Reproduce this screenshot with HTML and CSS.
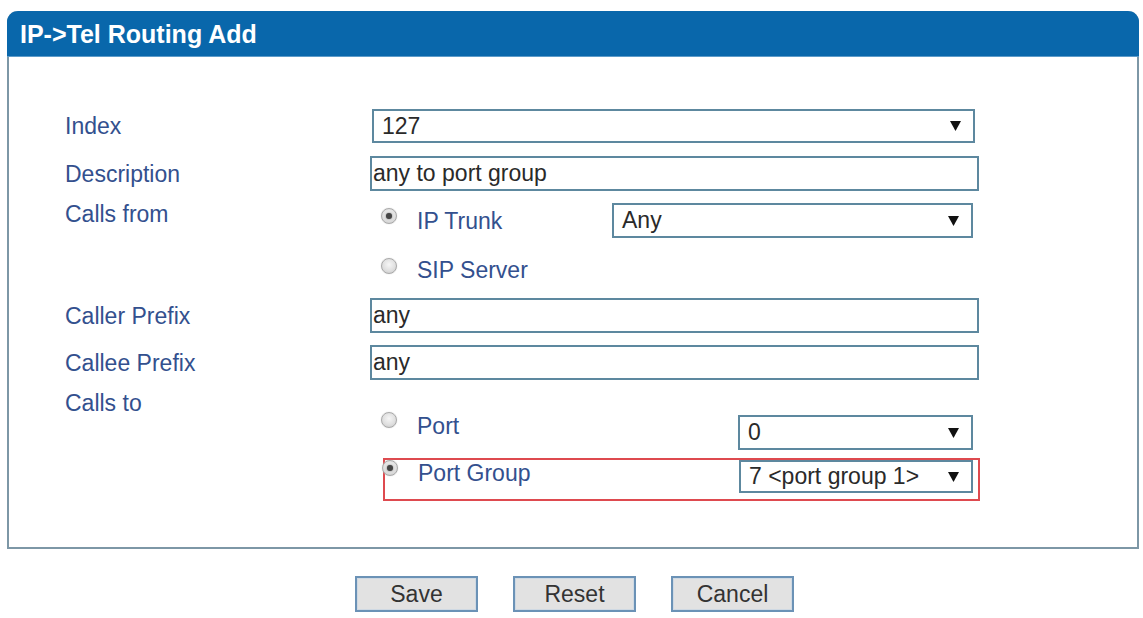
FILE: index.html
```html
<!DOCTYPE html>
<html>
<head>
<meta charset="utf-8">
<link rel="stylesheet" href="styles.css">
</head>
<body>
<div class="panel">
  <div class="head">IP-&gt;Tel Routing Add</div>
  <div class="body">
    <div class="row row-index">
      <div class="lbl">Index</div>
      <div class="ctl">
        <div class="sel sel-index"><span>127</span><svg class="arr" width="11" height="10" viewBox="0 0 11 10"><path d="M0 0 H11 L5.5 10 Z"/></svg></div>
      </div>
    </div>
    <div class="row row-desc">
      <div class="lbl">Description</div>
      <div class="ctl"><div class="inp">any to port group</div></div>
    </div>
    <div class="group group-from">
      <div class="lbl">Calls from</div>
      <div class="ctl col">
        <div class="opt opt-ip">
          <span class="radio on"></span><span class="otxt">IP Trunk</span>
          <div class="sel sel-any"><span>Any</span><svg class="arr" width="11" height="10" viewBox="0 0 11 10"><path d="M0 0 H11 L5.5 10 Z"/></svg></div>
        </div>
        <div class="opt opt-sip">
          <span class="radio"></span><span class="otxt">SIP Server</span>
        </div>
      </div>
    </div>
    <div class="row row-caller">
      <div class="lbl">Caller Prefix</div>
      <div class="ctl"><div class="inp">any</div></div>
    </div>
    <div class="row row-callee">
      <div class="lbl">Callee Prefix</div>
      <div class="ctl"><div class="inp">any</div></div>
    </div>
    <div class="group group-to">
      <div class="lbl">Calls to</div>
      <div class="ctl col col-to">
        <div class="opt opt-port">
          <span class="radio"></span><span class="otxt">Port</span>
          <div class="sel sel-port"><span>0</span><svg class="arr" width="11" height="10" viewBox="0 0 11 10"><path d="M0 0 H11 L5.5 10 Z"/></svg></div>
        </div>
        <div class="opt opt-group">
          <span class="radio on"></span><span class="otxt">Port Group</span>
          <div class="sel sel-group"><span>7 &lt;port group 1&gt;</span><svg class="arr" width="11" height="10" viewBox="0 0 11 10"><path d="M0 0 H11 L5.5 10 Z"/></svg></div>
        </div>
      </div>
    </div>
  </div>
</div>
<div class="buttons">
  <div class="btn">Save</div>
  <div class="btn">Reset</div>
  <div class="btn">Cancel</div>
</div>
</body>
</html>
```

FILE: styles.css
```css
html, body {
  margin: 0;
  padding: 0;
  background: #ffffff;
}
body {
  font-family: "Liberation Sans", Arial, sans-serif;
  font-size: 23px;
  color: #333333;
  width: 1143px;
  height: 618px;
  overflow: hidden;
}
.panel {
  margin: 11px 0 0 7px;
  width: 1132px;
  box-sizing: border-box;
  border: 2px solid #7d97a6;
  border-top: none;
  border-radius: 11px 11px 0 0;
}
.head {
  margin: 0 -2px;
  height: 46px;
  line-height: 46px;
  background: #0967ab;
  border-bottom: 1px solid #5d9bc9;
  box-sizing: border-box;
  border-radius: 11px 11px 0 0;
  color: #ffffff;
  font-weight: bold;
  font-size: 25px;
  padding-left: 13px;
}
.body {
  padding: 52px 0 46px 56px;
  display: flex;
  flex-direction: column;
}
.row, .group {
  display: flex;
}
.row {
  align-items: center;
  height: 35px;
}
.group {
  align-items: flex-start;
}
.lbl {
  width: 305px;
  flex: none;
  color: #33508e;
  line-height: 22px;
}
.ctl {
  flex: none;
}
.col {
  display: flex;
  flex-direction: column;
}
.row-index {
  height: 34px;
}
.row-desc {
  margin-top: 13px;
}
.group-from {
  margin-top: 12px;
}
.row-caller {
  margin-top: 11px;
}
.row-callee {
  margin-top: 12px;
}
.group-to {
  margin-top: 12px;
}
.col-to {
  padding-top: 20px;
}

/* controls */
.inp, .sel {
  box-sizing: border-box;
  border: 2px solid #5d889f;
  background: #ffffff;
  color: #2a2a2a;
  height: 35px;
  line-height: 31px;
  white-space: nowrap;
}
.inp {
  width: 609px;
  padding-left: 1px;
}
.sel {
  display: flex;
  align-items: center;
  justify-content: space-between;
  padding: 0 12px 0 8px;
}
.arr {
  flex: none;
  fill: #111111;
}
.sel-index {
  margin-left: 2px;
  width: 603px;
  height: 34px;
}

/* radio options */
.opt {
  display: flex;
  align-items: flex-start;
  height: 35px;
}
.radio {
  flex: none;
  width: 16px;
  height: 16px;
  box-sizing: border-box;
  border-radius: 50%;
  border: 1px solid #a9a9a9;
  background: radial-gradient(circle at 50% 40%, #f6f6f6 0%, #e0e0e0 55%, #c6c6c6 100%);
  box-shadow: 0 0 1px #bbbbbb;
  margin-left: 11px;
  margin-top: 5px;
  position: relative;
}
.radio.on::after {
  content: "";
  position: absolute;
  left: 4px;
  top: 4px;
  width: 6px;
  height: 6px;
  border-radius: 50%;
  background: #454545;
  box-shadow: 0 0 2px #666;
}
.otxt {
  margin-left: 20px;
  margin-top: 7px;
  line-height: 22px;
  color: #33508e;
  width: 195px;
  flex: none;
}
.sel-any {
  width: 361px;
}
.opt-sip {
  margin-top: 14px;
}
.opt-sip .radio {
  margin-top: 6px;
}
.opt-port {
  height: 38px;
}
.opt-port .radio {
  margin-top: 0;
}
.opt-port .otxt {
  margin-top: 3px;
  width: 321px;
}
.sel-port {
  margin-top: 3px;
  width: 235px;
}
.opt-group {
  margin-top: 8px;
  margin-left: 13px;
  width: 597px;
  height: 43px;
  box-sizing: border-box;
  border: 2px solid #de4a4f;
}
.opt-group .radio {
  margin-left: -3px;
  margin-top: 0;
}
.opt-group .otxt {
  margin-top: 2px;
  width: 321px;
}
.sel-group {
  margin-top: 0;
  width: 234px;
  height: 33px;
  line-height: 29px;
}

/* buttons */
.buttons {
  display: flex;
  gap: 35px;
  margin: 27px 0 0 355px;
}
.btn {
  width: 123px;
  height: 36px;
  box-sizing: border-box;
  border: 2px solid #6b92b6;
  box-shadow: inset 0 0 0 1px #cfd9e3;
  background: #e2e2e2;
  color: #333333;
  text-align: center;
  line-height: 32px;
}
```
